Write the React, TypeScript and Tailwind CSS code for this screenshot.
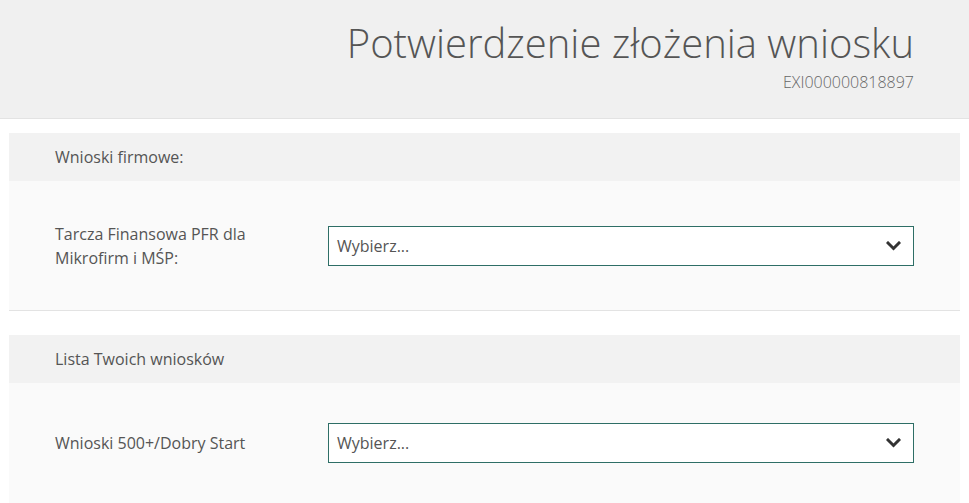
import React from 'react';

const Chevron = () => (
  <svg width="15" height="10" viewBox="0 0 15 10" fill="none">
    <path d="M2 2 L7.5 7.5 L13 2" stroke="#333" strokeWidth="3" strokeLinecap="square" />
  </svg>
);

const SelectBox = () => (
  <div className="flex-1 h-[40px] border border-[#2e6e66] bg-white flex items-center justify-between pl-2 pr-[12px]">
    <span className="text-[16px] text-[#555]">Wybierz...</span>
    <Chevron />
  </div>
);

interface SectionProps {
  title: string;
  label: React.ReactNode;
  bodyClass: string;
}

const Section: React.FC<SectionProps> = ({ title, label, bodyClass }) => (
  <div className="mx-[9px]">
    <div className="h-[48px] bg-[#f2f2f2] flex items-center pl-[46px] text-[16px] text-[#555]">
      {title}
    </div>
    <div className={`bg-[#fafafa] flex items-center pl-[46px] pr-[46px] ${bodyClass}`}>
      <div className="w-[273px] text-[16px] leading-[24px] text-[#555]">{label}</div>
      <SelectBox />
    </div>
  </div>
);

export default function App() {
  return (
    <div className="min-h-screen bg-white font-['Open_Sans',sans-serif]">
      {/* page header */}
      <div className="h-[119px] bg-[#f0f0f0] border-b border-[#e3e3e3] flex flex-col items-end pr-[55px] pt-[16px]">
        <h1 className="text-[40px] font-light text-[#555] leading-[54px]">Potwierdzenie złożenia wniosku</h1>
        <div className="text-[16px] font-light text-[#666] leading-[20px] mt-[2px]">EXI000000818897</div>
      </div>

      <div className="pt-[14px]">
        <Section
          title="Wnioski firmowe:"
          label={<>Tarcza Finansowa PFR dla<br />Mikrofirm i MŚP:</>}
          bodyClass="h-[130px] border-b border-[#e3e3e3]"
        />
      </div>

      <div className="pt-[24px]">
        <Section
          title="Lista Twoich wniosków"
          label="Wnioski 500+/Dobry Start"
          bodyClass="h-[120px]"
        />
      </div>
    </div>
  );
}
